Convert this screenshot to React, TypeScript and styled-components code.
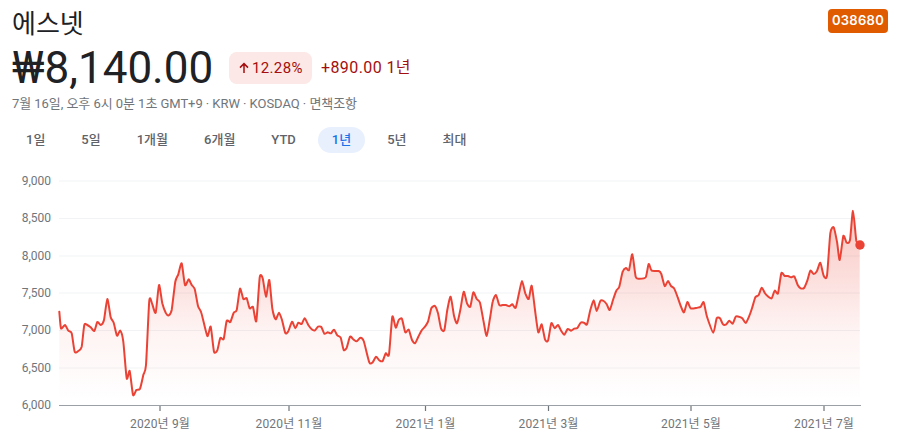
import React from "react";
import styled, { createGlobalStyle } from "styled-components";

const Global = createGlobalStyle`
  html, body { margin: 0; padding: 0; background: #fff; }
  body { font-family: Roboto, "Noto Sans CJK KR", sans-serif; }
`;

const Page = styled.div`
  width: 897px;
  height: 444px;
  overflow: hidden;
  display: flex;
  flex-direction: column;
`;
const Summary = styled.div`
  display: flex;
  flex-direction: column;
  padding: 9px 9px 0 12px;
  height: 161px;
  box-sizing: border-box;
`;
const TitleRow = styled.div`
  display: flex;
  justify-content: space-between;
  align-items: flex-start;
  height: 35px;
`;
const Name = styled.div`
  font: 400 26px/31px Roboto, "Noto Sans CJK KR", sans-serif;
  color: #202124;
`;
const Badge = styled.div`
  width: 60px;
  height: 24px;
  border-radius: 4px;
  background: #e05a00;
  color: #fff;
  font: 600 13px/22px Inter, Roboto, sans-serif;
  letter-spacing: 0.3px;
  text-align: center;
`;
const PriceRow = styled.div`
  display: flex;
  align-items: center;
  height: 48px;
`;
const Price = styled.div`
  font: 400 44px/48px Roboto, "Noto Sans CJK KR", sans-serif;
  color: #202124;
  width: 217px;
`;
const Pill = styled.div`
  display: flex;
  align-items: center;
  gap: 2px;
  height: 32px;
  width: 83px;
  box-sizing: border-box;
  padding-left: 9px;
  border-radius: 8px;
  background: #fce8e6;
  color: #a50e0e;
  font: 400 15px/32px Roboto, sans-serif;
  letter-spacing: 0.35px;
`;
const Delta = styled.div`
  margin-left: 9px;
  color: #a50e0e;
  font: 400 16px/32px Roboto, "Noto Sans CJK KR", sans-serif;
  letter-spacing: 0.4px;
`;
const Meta = styled.div`
  margin-top: 2px;
  font: 400 13px/19px Roboto, "Noto Sans CJK KR", sans-serif;
  letter-spacing: -0.05px;
  color: #70757a;
`;
const Tabs = styled.div`
  display: flex;
  gap: 8px;
  margin-top: 14px;
`;
const Tab = styled.div<{ $active?: boolean }>`
  height: 26px;
  padding: 0 14px;
  border-radius: 13px;
  display: flex;
  align-items: center;
  font: 500 13px/26px Roboto, "Noto Sans CJK KR", sans-serif;
  color: ${(p) => (p.$active ? "#1a73e8" : "#5f6368")};
  background: ${(p) => (p.$active ? "#e8f0fe" : "transparent")};
`;
const Chart = styled.svg`
  display: block;
  width: 897px;
  height: 283px;
  flex: none;
`;
const AxisText = styled.text`
  font: 400 12px Roboto, "Noto Sans CJK KR", sans-serif;
  fill: #70757a;
`;
const XText = styled(AxisText)`
  letter-spacing: 0.15px;
`;

const seg1 = [178,425,183,475,195,465,205,482,215,490,224,545,235,543,245,530,253,465,262,465,272,472,283,483,292,456,302,465,312,450,322,387,332,442,341,458,351,497,361,482,370,515,380,625,389,603,399,675,409,660,420,656,430,615,438,585,448,392,457,403,467,428,477,345,487,400,497,428,506,436,515,420,526,335,535,313,545,280,555,345,566,328,575,345,584,357,594,408,604,428,622,498,632,470,642,545,652,541,661,504,671,507,680,453,691,456,701,428,710,420,720,356,730,387,740,385,749,415,759,411,769,453,779,322,788,325,798,380,808,330,817,415,827,448,837,428,846,450,856,489,865,484,876,455,886,475,895,458];
const seg2 = [5,462,14,445,25,465,35,478,45,481,54,470,64,471,73,491,83,487,93,490,102,479,112,496,122,503,131,540,140,533,150,500,160,508,170,514,181,503,191,513,208,577,218,577,228,560,238,571,248,573,257,550,267,553,277,440,287,473,296,450,306,447,316,487,326,479,336,510,345,520,355,500,365,481,375,470,384,455,394,415,405,408,414,430,423,475,433,481,442,420,452,380,462,437,471,460,481,420,491,365,501,400,511,410,520,367,530,387,540,398,550,450,560,498,570,445,578,395,588,375,598,405,608,405,618,405,628,409,637,403,647,413,657,370,666,333,676,370,686,387,695,347,705,420,715,487,725,463,735,508,744,512,754,460,764,475,774,465,784,483,793,494,803,477,813,482,823,476,832,474,842,458,852,458,861,463,871,420,881,391,890,423];
const seg3 = [10,393,20,393,29,403,38,420,48,390,58,362,67,350,77,305,87,294,96,300,106,253,116,320,126,326,146,322,155,282,164,302,185,303,193,312,203,348,213,333,222,348,232,356,242,382,252,410,261,427,271,396,281,415,301,413,311,410,320,397,330,440,349,488,359,445,369,445,378,463,388,463,397,452,407,461,416,440,426,440,436,445,446,459,456,440,465,415,475,382,485,375,494,353,504,370,514,380,524,385,533,362,543,370,553,310,563,318,573,318,582,322,592,319,602,345,611,355,621,354,631,332,640,302,650,312,660,303,670,278,680,317,690,317,700,190,710,172,720,215,728,270,739,198,749,218,759,210,768,122,778,212,788,225];

type P = [number, number];
function toPoints(seg: number[], ox: number): P[] {
  const out: P[] = [];
  for (let i = 0; i < seg.length; i += 2) out.push([ox + seg[i] / 3, 170 + seg[i + 1] / 3]);
  return out;
}
const pts = [...toPoints(seg1, 0), ...toPoints(seg2, 300), ...toPoints(seg3, 597)];

// Catmull-Rom with a low tension: rounds the data points with little overshoot.
function smooth(p: P[], k = 0.11) {
  let d = `M${p[0][0].toFixed(1)},${p[0][1].toFixed(1)}`;
  for (let i = 0; i < p.length - 1; i++) {
    const a = p[Math.max(i - 1, 0)];
    const b = p[i];
    const c = p[i + 1];
    const e = p[Math.min(i + 2, p.length - 1)];
    const c1x = b[0] + (c[0] - a[0]) * k;
    const c1y = b[1] + (c[1] - a[1]) * k;
    const c2x = c[0] - (e[0] - b[0]) * k;
    const c2y = c[1] - (e[1] - b[1]) * k;
    d += ` C${c1x.toFixed(1)},${c1y.toFixed(1)} ${c2x.toFixed(1)},${c2y.toFixed(1)} ${c[0].toFixed(1)},${c[1].toFixed(1)}`;
  }
  return d;
}
const linePath = smooth(pts);
const areaPath = linePath + " L859.7,405 L59.3,405 Z";

const yLabels = [
  ["9,000", 181],
  ["8,500", 218.5],
  ["8,000", 256],
  ["7,500", 293],
  ["7,000", 330.5],
  ["6,500", 368],
  ["6,000", 405],
] as const;
const xLabels = [
  ["2020년 9월", 160],
  ["2020년 11월", 289],
  ["2021년 1월", 425.5],
  ["2021년 3월", 548.5],
  ["2021년 5월", 691],
  ["2021년 7월", 824],
] as const;
const tabs = ["1일", "5일", "1개월", "6개월", "YTD", "1년", "5년", "최대"];

export default function App() {
  return (
    <Page>
      <Global />
      <Summary>
        <TitleRow>
          <Name>에스넷</Name>
          <Badge>038680</Badge>
        </TitleRow>
        <PriceRow>
          <Price>₩8,140.00</Price>
          <Pill>
            <svg width="12" height="12" viewBox="0 0 12 12" aria-hidden="true">
              <path d="M6 11V2M2 5.6 6 1.6l4 4" fill="none" stroke="#a50e0e" strokeWidth="1.5" />
            </svg>
            12.28%
          </Pill>
          <Delta>+890.00 1년</Delta>
        </PriceRow>
        <Meta>7월 16일, 오후 6시 0분 1초 GMT+9 · KRW · KOSDAQ · 면책조항</Meta>
        <Tabs>
          {tabs.map((t) => (
            <Tab key={t} $active={t === "1년"}>
              {t}
            </Tab>
          ))}
        </Tabs>
      </Summary>
      <Chart viewBox="0 161 897 283">
        <defs>
          <linearGradient id="area" gradientUnits="userSpaceOnUse" x1="0" y1="230" x2="0" y2="400">
            <stop offset="0" stopColor="#ea4335" stopOpacity="0.27" />
            <stop offset="0.59" stopColor="#ea4335" stopOpacity="0.06" />
            <stop offset="1" stopColor="#ea4335" stopOpacity="0" />
          </linearGradient>
        </defs>
        {yLabels.slice(0, 6).map(([l, y]) => (
          <line key={l} x1="59" x2="860" y1={y} y2={y} stroke="#f1f3f4" strokeWidth="1" />
        ))}
        <path d={areaPath} fill="url(#area)" />
        <line x1="59" x2="861" y1="405.5" y2="405.5" stroke="#9aa0a6" strokeWidth="1" />
        {xLabels.map(([l, x]) => (
          <line key={l} x1={x} x2={x} y1="406" y2="411" stroke="#70757a" strokeWidth="1.2" />
        ))}
        <path d={linePath} fill="none" stroke="#ea4335" strokeWidth="2" strokeLinejoin="round" strokeLinecap="round" />
        <circle cx="860" cy="245" r="4.7" fill="#ea4335" />
        {yLabels.map(([l, y]) => (
          <AxisText key={l} x="51" y={y + 3.5} textAnchor="end">
            {l}
          </AxisText>
        ))}
        {xLabels.map(([l, x]) => (
          <XText key={l} x={x} y="428" textAnchor="middle">
            {l}
          </XText>
        ))}
      </Chart>
    </Page>
  );
}
